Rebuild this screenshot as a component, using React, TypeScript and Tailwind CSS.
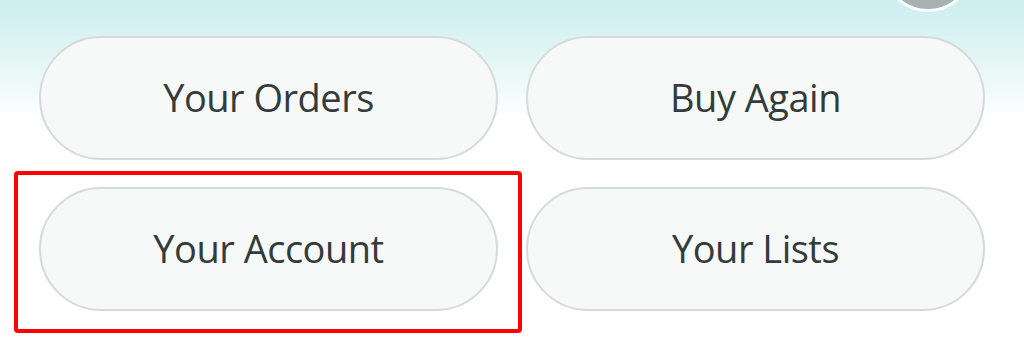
const items = ['Your Orders', 'Buy Again', 'Your Account', 'Your Lists'];

function PillButton({ label }: { label: string }) {
  return (
    <button
      type="button"
      className="flex h-[124px] w-full items-center justify-center rounded-full border-2 border-[#d5dbdb] bg-[#f7f8f8] pb-[2px] text-[38px] tracking-[-0.5px] text-[#333b3b]"
      style={{ fontFamily: '"Open Sans", "Noto Sans", sans-serif' }}
    >
      {label}
    </button>
  );
}

export default function App() {
  return (
    <div className="relative h-[342px] w-[1024px] overflow-hidden bg-white">
      <div className="absolute inset-x-0 top-0 h-[120px] bg-gradient-to-b from-[#cdeef0] via-[#e3f6f3] to-white" />
      <div className="absolute left-[882px] top-[-80px] h-[92px] w-[92px] rounded-full border-[3px] border-white bg-[#a7b3b3]" />

      <div className="relative grid grid-cols-2 gap-x-[28px] gap-y-[27px] pl-[39px] pr-[39px] pt-[36px]">
        {items.map((label) => (
          <div key={label} className="relative">
            {label === 'Your Account' ? (
              <div className="absolute -bottom-[22px] -left-[25px] -right-[24px] -top-[16px] rounded-[4px] border-[4px] border-[#ff0000]" />
            ) : null}
            <PillButton label={label} />
          </div>
        ))}
      </div>
    </div>
  );
}
